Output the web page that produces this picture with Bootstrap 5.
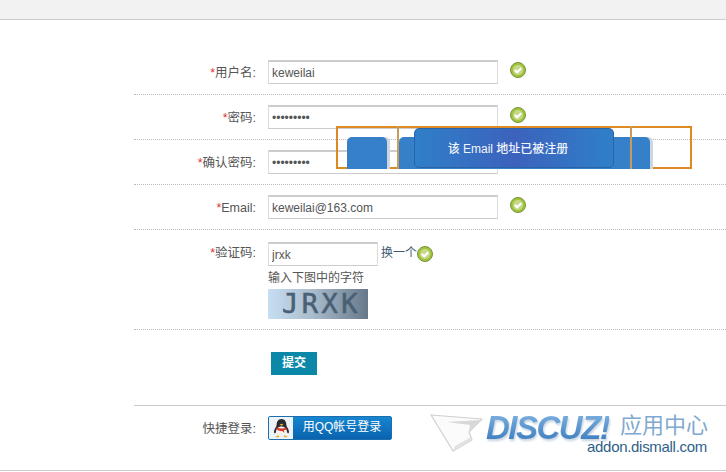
<!DOCTYPE html>
<html>
<head>
    <meta charset='utf-8'>
    <title>注册</title>
    <meta name='viewport' content='width=device-width, initial-scale=1'>
    <link href="https://cdn.jsdelivr.net/npm/bootstrap@5.3.6/dist/css/bootstrap.min.css" rel="stylesheet">
    <style>
        html, body { height: 472px; overflow: hidden; }
        body { background: #fff; color: #555; font: 12px/1.3 "Liberation Sans", "Noto Sans CJK SC", sans-serif; position: relative; }
        .top-strip { height: 20px; background: #f2f2f2; border-bottom: 1px solid #ccc; }
        .reg-form { margin-left: 134px; padding-top: 30px; height: 451px; }
        .reg-row { padding: 10px 0; height: 45px; border-bottom: 1px dotted #bbb; }
        .reg-label { width: 122px; margin-right: 12px; padding-top: 2px; text-align: right; flex: none; font-size: 12.5px; }
        .reg-label em { color: #d33; font-style: normal; }
        .reg-input.form-control { width: 230px; height: 24px; padding: 1px 3px; font-size: 12px; line-height: 20px; color: #555; border: 1px solid #ccc; border-top-width: 2px; border-left-color: #ddd; border-right-color: #ddd; border-radius: 0; box-shadow: none; flex: none; }
        .reg-input.short-input { width: 110px; }
        .ok-icon { width: 16px; height: 16px; flex: none; }
        .ok-gap { margin-left: 12px; margin-top: -5px; }
        .captcha-row { height: 100px; padding: 12px 0 0; align-items: flex-start; }
        .captcha-row .reg-label { padding-top: 3px; }
        .refresh-link { color: #3d5a73; margin-left: 3px; }
        .captcha-hint { margin: 4px 0 0 0; line-height: 16px; }
        .captcha-pic { width: 100px; height: 30px; margin-top: 3px; overflow: hidden; background: linear-gradient(90deg, #c6def2, #a9bccb 45%, #66788a); color: #4a6074; font: 400 27px/30px "DejaVu Sans Mono", monospace; letter-spacing: 3.5px; padding-left: 14px; -webkit-text-stroke: 0.6px #4a6074; }
        .submit-row { height: 76px; padding: 22px 0 0 137px; border-bottom: 1px solid #ccc; }
        .submit-btn.btn { width: 46px; height: 23px; padding: 0; font-size: 12px; font-weight: 700; line-height: 23px; color: #fff; background: #0b88a8; border: 0; border-radius: 0; }
        .login-row { height: 64px; padding-top: 10px; align-items: flex-start; }
        .login-row .reg-label { padding-top: 0; line-height: 26px; }
        .qq-btn { width: 124px; height: 24px; border: 1px solid #1b6fae; border-radius: 2px; overflow: hidden; background: linear-gradient(#1786d0, #0a62ae); color: #fff; }
        .qq-face { width: 24px; height: 22px; background: #eef3f8; flex: none; }
        .qq-text { flex: 1; text-align: center; }
        .page-foot { position: absolute; left: 0; right: 0; top: 470px; border-top: 1px solid #ccc; }

        /* the logo and the pop-up lie over the page */
        .addon-logo { position: absolute; left: 430px; top: 410px; width: 282px; height: 50px; }
        .plane { position: absolute; left: 0; top: 2px; width: 56px; height: 42px; }
        .logo-word { position: absolute; left: 56px; top: 1px; font: italic 700 33px/34px "Liberation Sans", sans-serif; letter-spacing: -1.5px; color: transparent; background: linear-gradient(#82b4e2, #3577bb); -webkit-background-clip: text; background-clip: text; filter: drop-shadow(1px 2px 1px #c5d3e0); }
        .logo-cn { position: absolute; left: 190px; top: 0; font: 22px/26px "Noto Sans CJK SC", sans-serif; color: #7fa9cf; }
        .logo-url { position: absolute; left: 157px; top: 28px; font: 15px/18px "Liberation Sans", sans-serif; letter-spacing: -0.3px; color: #2f5f88; }
        .dlg-frame { position: absolute; left: 336px; top: 126px; width: 356px; height: 43px; border: 2px solid #dd8a24; }
        .dlg-line { position: absolute; top: -2px; width: 2px; height: 43px; background: #c99a5e; }
        .dlg-line.first { left: 59px; }
        .dlg-line.second { left: 292px; }
        .back-tile { position: absolute; top: 9px; height: 32px; background: #3580c8; border-radius: 5px 5px 0 0; box-shadow: 3px 0 0 #cfd6e2; }
        .back-tile.left-tile { left: 9px; width: 40px; }
        .back-tile.wide-tile { left: 61px; width: 251px; }
        .dlg-front { position: absolute; left: 76px; top: 0; width: 200px; height: 40px; padding-right: 12px; border: 1px solid #2a63a8; border-radius: 5px; background: linear-gradient(90deg, #2f7fc8, #3c62bd 50%, #2f7fc8); color: #f2f6fc; font-weight: 500; font-size: 12px; line-height: 40px; text-align: center; }
    </style>
</head>
<body>
    <svg width="0" height="0" class="position-absolute">
        <symbol id="okmark" viewBox="0 0 16 16">
            <circle cx="8" cy="8" r="7.5" fill="#a2c43c" stroke="#76933a"/>
            <circle cx="8" cy="8" r="5" fill="#c6d98a"/>
            <path d="M4.8 8l2.3 2.3 4.2-4" fill="none" stroke="#fff" stroke-width="2.2"/>
        </symbol>
    </svg>

    <div class="top-strip"></div>

    <form class="reg-form">
        <div class="reg-row d-flex align-items-center">
            <label class="reg-label"><em>*</em>用户名:</label>
            <input type="text" class="form-control reg-input" value="keweilai">
            <svg class="ok-icon ok-gap"><use href="#okmark"/></svg>
        </div>
        <div class="reg-row d-flex align-items-center">
            <label class="reg-label"><em>*</em>密码:</label>
            <input type="password" class="form-control reg-input" value="keweilai1">
            <svg class="ok-icon ok-gap"><use href="#okmark"/></svg>
        </div>
        <div class="reg-row d-flex align-items-center">
            <label class="reg-label"><em>*</em>确认密码:</label>
            <input type="password" class="form-control reg-input" value="keweilai1">
            <svg class="ok-icon ok-gap"><use href="#okmark"/></svg>
        </div>
        <div class="reg-row d-flex align-items-center">
            <label class="reg-label"><em>*</em>Email:</label>
            <input type="text" class="form-control reg-input" value="keweilai@163.com">
            <svg class="ok-icon ok-gap"><use href="#okmark"/></svg>
        </div>
        <div class="reg-row captcha-row d-flex">
            <label class="reg-label"><em>*</em>验证码:</label>
            <div>
                <div class="d-flex align-items-center">
                    <input type="text" class="form-control reg-input short-input" value="jrxk">
                    <span class="refresh-link">换一个</span>
                    <svg class="ok-icon"><use href="#okmark"/></svg>
                </div>
                <p class="captcha-hint">输入下图中的字符</p>
                <div class="captcha-pic">JRXK</div>
            </div>
        </div>
        <div class="submit-row">
            <button type="button" class="btn submit-btn">提交</button>
        </div>
        <div class="login-row d-flex">
            <label class="reg-label">快捷登录:</label>
            <div class="qq-btn d-flex align-items-center">
                <span class="qq-face d-flex align-items-center justify-content-center">
                    <svg width="17" height="19" viewBox="0 0 17 19">
                        <ellipse cx="8.5" cy="11" rx="6" ry="7" fill="#f4f1ea"/>
                        <path d="M8.5 0C5 0 3.6 3 3.6 6c0 1.200-.8 2-1.600 3.500C1 11.500.6 14 1.600 14.300c.6.100 1-.6 1.400-1.300 0-3 2-5.500 5.500-5.500s5.500 2.500 5.500 5.500c.4.700.8 1.400 1.400 1.300 1-.3.600-2.800-.4-4.800-.8-1.500-1.600-2.300-1.600-3.500C13.400 3 12 0 8.500 0z" fill="#2a2a30"/>
                        <path d="M3.500 8.500c3 1.300 7 1.300 10 0l.3 1.700c-1 .6-2 1-3 1.100l.6 2.500-2.200-1.800c-2.200.2-4.200-.5-5.900-1.800z" fill="#d9392b"/>
                        <path d="M6.500 5.500l2-.7 2 .7-2 1.300z" fill="#eeb22d"/>
                        <path d="M2.500 18c0-1 2-1.600 3.500-1.600v1.800H3c-.3 0-.5-.1-.5-.2zm12 0c0-1-2-1.600-3.500-1.600v1.800h3c.3 0 .5-.1.500-.2z" fill="#eea52a"/>
                    </svg>
                </span>
                <span class="qq-text">用QQ帐号登录</span>
            </div>
        </div>
    </form>

    <div class="page-foot"></div>

    <div class="addon-logo">
        <svg class="plane" viewBox="0 0 56 42">
            <path d="M1 3l51 4-13 13 3 8-19 11z" fill="#fbfbfb" stroke="#cfcfcf" stroke-width="1.200" stroke-linejoin="round"/>
            <path d="M17 10l33-2-11 11 1-6z" fill="#d8d8d8"/>
            <path d="M23 39l19-11-1-3-16 9z" fill="#e2e2e2"/>
        </svg>
        <span class="logo-word">DISCUZ!</span>
        <span class="logo-cn">应用中心</span>
        <span class="logo-url">addon.dismall.com</span>
    </div>

    <div class="dlg-frame">
        <div class="back-tile left-tile"></div>
        <div class="back-tile wide-tile"></div>
        <div class="dlg-line first"></div>
        <div class="dlg-line second"></div>
        <div class="dlg-front">该 Email 地址已被注册</div>
    </div>

    <script src="https://cdn.jsdelivr.net/npm/bootstrap@5.3.6/dist/js/bootstrap.bundle.min.js"></script>
</body>
</html>
